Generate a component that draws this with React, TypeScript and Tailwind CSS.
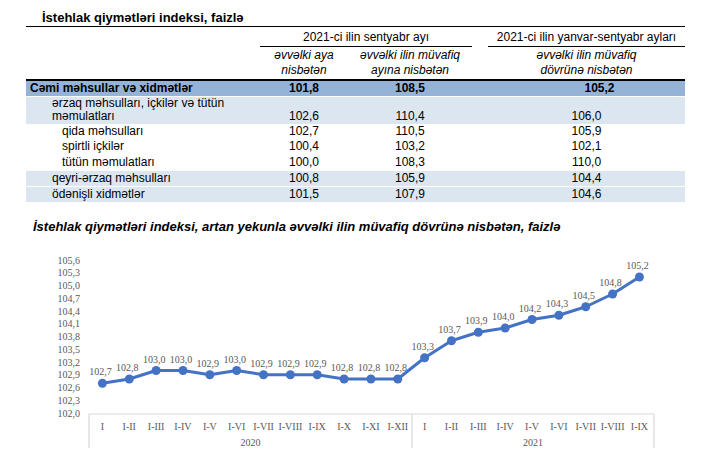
const cols = "grid grid-cols-[234px_88px_124px_16px_197px]"

const rows = [
  { label: ["Cəmi məhsullar və xidmətlər"], v: ["101,8", "108,5", "105,2"], cls: "h-[15px] bg-[#95b3d7] font-bold items-center", pad: "pl-[4px]" },
  { label: ["ərzaq məhsulları, içkilər və tütün", "məmulatları"], v: ["102,6", "110,4", "106,0"], cls: "mt-[1px] h-[27px] bg-[#dce6f1] items-end pb-[1px]", pad: "pl-[26px]" },
  { label: ["qida məhsulları"], v: ["102,7", "110,5", "105,9"], cls: "h-[15px] items-center", pad: "pl-[36px]" },
  { label: ["spirtli içkilər"], v: ["100,4", "103,2", "102,1"], cls: "h-[15px] items-center", pad: "pl-[36px]" },
  { label: ["tütün məmulatları"], v: ["100,0", "108,3", "110,0"], cls: "h-[16px] items-center", pad: "pl-[36px]" },
  { label: ["qeyri-ərzaq məhsulları"], v: ["100,8", "105,9", "104,4"], cls: "mt-[1px] h-[15px] bg-[#dce6f1] items-center", pad: "pl-[26px]" },
  { label: ["ödənişli xidmətlər"], v: ["101,5", "107,9", "104,6"], cls: "mt-[1px] h-[15px] bg-[#dce6f1] items-center", pad: "pl-[26px]" },
]

const cats = [
  "I", "I-II", "I-III", "I-IV", "I-V", "I-VI", "I-VII", "I-VIII", "I-IX", "I-X", "I-XI", "I-XII",
  "I", "I-II", "I-III", "I-IV", "I-V", "I-VI", "I-VII", "I-VIII", "I-IX",
]
const values = [
  102.7, 102.8, 103.0, 103.0, 102.9, 103.0, 102.9, 102.9, 102.9, 102.8, 102.8, 102.8,
  103.3, 103.7, 103.9, 104.0, 104.2, 104.3, 104.5, 104.8, 105.2,
]

const fmt = (v: number) => v.toFixed(1).replace(".", ",")
const px = (i: number) => 89 + 26.85 * (i + 0.5)
const py = (v: number) => 414 - (v - 102) * 42.5

function Chart() {
  const ticks = Array.from({ length: 13 }, (_, i) => 102 + i * 0.3)
  const pts = values.map((v, i) => `${px(i)},${py(v)}`).join(" ")
  return (
    <svg width="725" height="223" viewBox="0 235 725 223" className="block" fontFamily="'Liberation Serif', serif" fontSize="10" fill="#595959">
      {ticks.map((t) => (
        <text key={t} x="80" y={py(t) + 3.5} textAnchor="end">{fmt(t)}</text>
      ))}
      <g stroke="#d9d9d9" strokeWidth="1.2">
        <line x1="89" y1="415" x2="654" y2="415" />
        <line x1="89" y1="415" x2="89" y2="449" />
        <line x1="412" y1="415" x2="412" y2="449" />
        <line x1="654" y1="415" x2="654" y2="449" />
      </g>
      {cats.map((c, i) => (
        <text key={i} x={px(i)} y="430.5" textAnchor="middle">{c}</text>
      ))}
      <text x="250.5" y="446.5" textAnchor="middle">2020</text>
      <text x="533" y="446.5" textAnchor="middle">2021</text>
      <polyline points={pts} fill="none" stroke="#4472c4" strokeWidth="3" strokeLinejoin="round" />
      {values.map((v, i) => (
        <circle key={i} cx={px(i)} cy={py(v)} r="4.5" fill="#4472c4" />
      ))}
      {values.map((v, i) => (
        <text key={i} x={px(i) - 2} y={py(v) - 8} textAnchor="middle">{fmt(v)}</text>
      ))}
    </svg>
  )
}

export default function App() {
  return (
    <div className="w-[725px] h-[458px] overflow-hidden bg-white text-black font-['Liberation_Sans',Arial,sans-serif]">
      {/* Table */}
      <div className="ml-[26px] w-[659px] text-[12px]">
        <div className="pt-[10px] pb-[1px] pl-[16px] border-b border-black">
          <h1 className="text-[13px] leading-[15px] font-bold">İstehlak qiymətləri indeksi, faizlə</h1>
        </div>

        <div className={`${cols} h-[20px]`}>
          <div />
          <div className="col-span-2 border-b border-black flex items-center justify-center leading-[14px]">2021-ci ilin sentyabr ayı</div>
          <div />
          <div className="border-b border-black flex items-center justify-center leading-[14px]">2021-ci ilin yanvar-sentyabr ayları</div>
        </div>

        <div className={`${cols} h-[34px] border-b-2 border-black italic leading-[15px] text-center`}>
          <div />
          <div className="pt-[1px]">əvvəlki aya<br />nisbətən</div>
          <div className="pt-[1px]">əvvəlki ilin müvafiq<br />ayına nisbətən</div>
          <div />
          <div className="pt-[1px]">əvvəlki ilin müvafiq<br />dövrünə nisbətən</div>
        </div>

        {rows.map((r, idx) => (
          <div key={idx} className={`${cols} ${r.cls} leading-[13px]`}>
            <div className={r.pad}>
              {r.label.map((l) => (
                <div key={l}>{l}</div>
              ))}
            </div>
            <div className="text-center">{r.v[0]}</div>
            <div className="text-center">{r.v[1]}</div>
            <div />
            <div className={idx === 0 ? "text-center pl-[26px]" : "text-center"}>{r.v[2]}</div>
          </div>
        ))}
      </div>

      {/* Chart */}
      <h2 className="mt-[17px] pl-[33px] text-[13px] leading-[15px] font-bold italic">
        İstehlak qiymətləri indeksi, artan yekunla əvvəlki ilin müvafiq dövrünə nisbətən, faizlə
      </h2>
      <Chart />
    </div>
  )
}
